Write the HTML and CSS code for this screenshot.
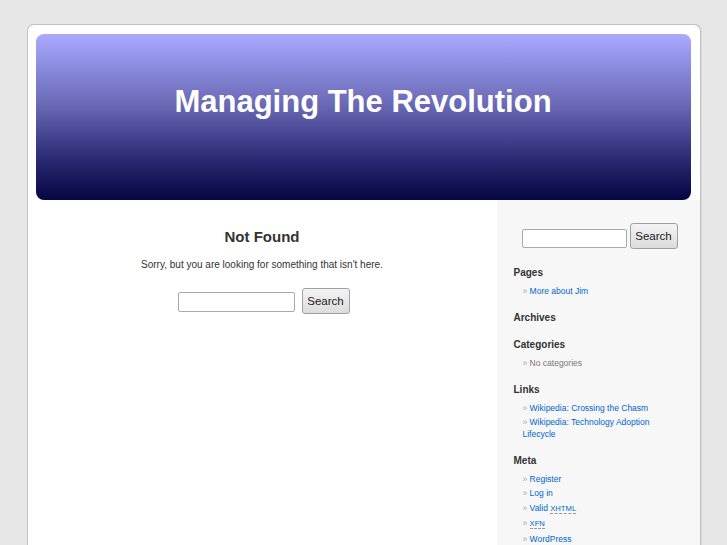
FILE: index.html
```html
<!DOCTYPE html>
<html lang="en">
<head>
    <meta charset="UTF-8">
    <meta name="viewport" content="width=device-width, initial-scale=1.0">
    <title>Managing The Revolution</title>
    <link rel="stylesheet" href="styles.css">
</head>
<body>
    <div class="page">
        <div class="header-wrap">
            <div class="header">
                <h1>Managing The Revolution</h1>
            </div>
        </div>
        <div class="content">
            <div class="main">
                <h2>Not Found</h2>
                <p>Sorry, but you are looking for something that isn't here.</p>
                <form class="search main-search">
                    <input type="text" class="search-input">
                    <button type="button" class="search-button">Search</button>
                </form>
            </div>
            <div class="sidebar">
                <form class="search side-search">
                    <input type="text" class="search-input">
                    <button type="button" class="search-button">Search</button>
                </form>
                <div class="widget">
                    <h2>Pages</h2>
                    <ul>
                        <li><a href="#">More about Jim</a></li>
                    </ul>
                </div>
                <div class="widget">
                    <h2>Archives</h2>
                </div>
                <div class="widget">
                    <h2>Categories</h2>
                    <ul>
                        <li>No categories</li>
                    </ul>
                </div>
                <div class="widget">
                    <h2>Links</h2>
                    <ul>
                        <li><a href="#">Wikipedia: Crossing the Chasm</a></li>
                        <li><a href="#">Wikipedia: Technology Adoption Lifecycle</a></li>
                    </ul>
                </div>
                <div class="widget">
                    <h2>Meta</h2>
                    <ul>
                        <li><a href="#">Register</a></li>
                        <li><a href="#">Log in</a></li>
                        <li><a href="#">Valid <abbr>XHTML</abbr></a></li>
                        <li><a href="#"><abbr>XFN</abbr></a></li>
                        <li><a href="#">WordPress</a></li>
                    </ul>
                </div>
            </div>
        </div>
    </div>
</body>
</html>
```

FILE: styles.css
```css
body {
    margin: 0;
    background-color: #e7e7e7;
    font-family: "Liberation Sans", Arial, sans-serif;
    color: #333;
}
.page {
    width: 672px;
    margin: 24px auto 0;
    background: #fff;
    border: 1px solid #c2c2c2;
    border-bottom: none;
    border-radius: 7px 7px 0 0;
    box-shadow: 1px 0 0 #d8d8d8;
    min-height: 560px;
    display: flex;
    flex-direction: column;
}
.header-wrap {
    padding: 9px 9px 0 8px;
}
.header {
    height: 166px;
    border-radius: 8px;
    background: linear-gradient(to bottom, #abaaff 0%, #8e8ee2 18%, #6a6ab6 42%, #43438f 62%, #1f1f66 82%, #060642 100%);
    box-sizing: border-box;
    padding-top: 50px;
    text-align: center;
}
.header h1 {
    margin: 0;
    font-size: 31px;
    line-height: 36px;
    font-weight: bold;
    color: #fff;
}
.content {
    display: flex;
    flex: 1;
}
.main {
    width: 469px;
    padding-top: 28px;
    text-align: center;
}
.main h2 {
    margin: 0;
    font-size: 15px;
    line-height: 18px;
    font-weight: bold;
    color: #333;
}
.main p {
    margin: 12px 0 0;
    font-size: 10px;
    line-height: 13px;
}
.search {
    display: flex;
    align-items: center;
    margin: 0;
}
.main-search {
    justify-content: center;
    gap: 7px;
    margin-top: 17px;
    padding-left: 3px;
}
.search-input {
    box-sizing: border-box;
    height: 20px;
    border: 1px solid #a9a9a9;
    border-radius: 2px;
    background: #fff;
    padding: 0 3px;
    margin: 0;
}
.main-search .search-input {
    width: 117px;
    margin-top: 2px;
}
.search-button {
    box-sizing: border-box;
    width: 48px;
    height: 26px;
    padding: 0;
    margin: 0;
    border: 1px solid #a0a0a0;
    border-radius: 3px;
    background: linear-gradient(to bottom, #f3f3f3, #dcdcdc);
    font-family: "Liberation Sans", Arial, sans-serif;
    font-size: 11.5px;
    color: #222;
}
.sidebar {
    flex: 1;
    background: #f7f7f7;
    padding: 23px 20px 0 17px;
}
.side-search {
    gap: 3px;
    margin: 0 0 17px 8px;
}
.side-search .search-input {
    width: 105px;
    height: 19px;
    margin-top: 4px;
}
.widget {
    margin-bottom: 13.5px;
}
.widget h2 {
    margin: 0;
    font-size: 10px;
    line-height: 14px;
    font-weight: bold;
    color: #333;
}
.widget ul {
    list-style: none;
    margin: 5px 0 0 9px;
    padding: 0;
}
.widget li {
    font-size: 8.5px;
    line-height: 12px;
    margin-bottom: 2.5px;
    color: #777;
}
.widget li:before {
    content: "\00BB\0020";
    color: #aaa;
}
.widget a {
    color: #0066cc;
    text-decoration: none;
}
abbr {
    font-size: 0.9em;
    text-decoration: none;
    border-bottom: 1px dashed #999;
}
```
